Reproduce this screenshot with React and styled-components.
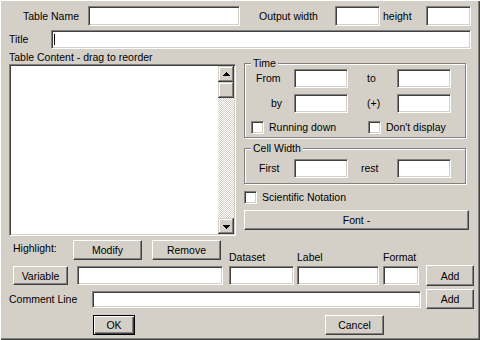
import React from 'react';
import styled, { createGlobalStyle, css } from 'styled-components';

const Global = createGlobalStyle`
  html, body { margin: 0; padding: 0; background: #d4d0c8; }
  body { font-family: "Liberation Sans", Arial, sans-serif; font-size: 10.5px; color: #000; }
  * { box-sizing: border-box; }
`;

const Window = styled.div`
  width: 480px;
  height: 340px;
  background: #d4d0c8;
  box-shadow: inset 1px 1px #fff, inset -1px -1px #404040, inset -2px -2px #808080;
  padding-top: 6px;
  display: flex;
  flex-direction: column;
  overflow: hidden;
`;

const Row = styled.div`
  display: flex;
  align-items: ${p => p.$align || 'center'};
  height: ${p => p.$h}px;
  margin-top: ${p => p.$mt || 0}px;
  flex-shrink: 0;
`;

const Label = styled.span`
  display: block;
  flex-shrink: 0;
  width: ${p => (p.$w ? p.$w + 'px' : 'auto')};
  margin-left: ${p => p.$ml || 0}px;
  padding-left: ${p => p.$pl || 0}px;
  text-align: ${p => (p.$right ? 'right' : 'left')};
  white-space: nowrap;
  line-height: ${p => p.$lh || 13}px;
  align-self: ${p => p.$self || 'auto'};
`;

const sunken = css`
  border: 1px solid;
  border-color: #808080 #fff #fff #808080;
  box-shadow: inset 1px 1px #404040, inset -1px -1px #d4d0c8;
  background: #fff;
`;

const Input = styled.input`
  ${sunken}
  display: block;
  flex-shrink: 0;
  width: ${p => p.$w}px;
  height: ${p => p.$h || 19}px;
  margin: 0 0 0 ${p => p.$ml || 0}px;
  padding: 0 3px;
  font: inherit;
  outline: none;
`;

const CaretWrap = styled.div`
  position: relative;
  flex-shrink: 0;
`;

const Caret = styled.span`
  position: absolute;
  left: 3px;
  top: 4px;
  width: 1px;
  height: 11px;
  background: #000;
`;

const Button = styled.button`
  display: block;
  flex-shrink: 0;
  width: ${p => p.$w}px;
  height: ${p => p.$h || 20}px;
  margin: ${p => p.$mt || 0}px 0 0 ${p => p.$ml || 0}px;
  padding: 0;
  background: #d4d0c8;
  font: inherit;
  color: #000;
  border: 1px solid;
  border-color: #fff #404040 #404040 #fff;
  box-shadow: inset -1px -1px #808080;
  ${p =>
    p.$default &&
    css`
      border-color: #000;
      box-shadow: inset 1px 1px #fff, inset -1px -1px #404040, inset -2px -2px #808080;
    `}
`;

const Box = styled.span`
  ${sunken}
  display: block;
  flex-shrink: 0;
  width: 13px;
  height: 13px;
`;

const Check = styled.label`
  display: flex;
  align-items: center;
  gap: 5px;
  padding-left: ${p => p.$pl || 0}px;
  margin-top: ${p => p.$mt || 0}px;
  grid-column: ${p => p.$col || 'auto'};
  line-height: 13px;
  white-space: nowrap;
`;

const Middle = styled.div`
  display: flex;
  margin-top: 2px;
  flex-shrink: 0;
`;

const LeftCol = styled.div`
  display: flex;
  flex-direction: column;
  margin-left: 9px;
  width: 227px;
`;

const RightCol = styled.div`
  display: flex;
  flex-direction: column;
  margin-left: 8px;
  width: 226px;
`;

const ListBox = styled.div`
  ${sunken}
  width: 227px;
  height: 172px;
  padding: 1px;
  display: flex;
  justify-content: flex-end;
`;

const ScrollBar = styled.div`
  width: 16px;
  display: flex;
  flex-direction: column;
`;

const ScrollBtn = styled.div`
  width: 16px;
  height: 16px;
  flex-shrink: 0;
  background: #d4d0c8;
  box-shadow: inset -1px -1px #404040, inset 1px 1px #d4d0c8, inset -2px -2px #808080, inset 2px 2px #fff;
  display: flex;
  align-items: center;
  justify-content: center;
`;

const Track = styled.div`
  flex: 1;
  background: repeating-conic-gradient(#d4d0c8 0 25%, #fff 0 50%) 0 0 / 2px 2px;
`;

const Group = styled.div`
  position: relative;
  width: 222px;
  height: ${p => p.$h}px;
  margin-top: ${p => p.$mt}px;
  border: 1px solid #808080;
  box-shadow: inset 1px 1px #fff, 1px 1px #fff;
  padding-top: ${p => p.$pt}px;
  flex-shrink: 0;
`;

const Legend = styled.span`
  position: absolute;
  left: 6px;
  top: -7px;
  padding: 0 2px;
  background: #d4d0c8;
  line-height: 13px;
`;

const GroupGrid = styled.div`
  display: grid;
  grid-template-columns: 49px 54px 49px 54px;
  grid-auto-rows: 19px;
  row-gap: 6px;
  align-items: center;
`;

const ColumnHeads = styled.div`
  display: flex;
  align-self: flex-end;
  margin-left: 8px;
`;

const Arrow = ({ down }) => (
  <svg width="7" height="4" viewBox="0 0 7 4" shapeRendering="crispEdges" style={{ display: 'block', marginTop: down ? 1 : -1 }}>
    <polygon points={down ? '0,0 7,0 3.5,4' : '0,4 7,4 3.5,0'} fill="#000" />
  </svg>
);

export default function App() {
  return (
    <>
      <Global />
      <Window>
        <Row $h={20}>
          <Label $w={79} $right>Table Name</Label>
          <Input $w={152} $h={20} $ml={9} />
          <Label $w={95} $pl={19}>Output width</Label>
          <Input $w={45} $h={20} />
          <Label $w={46} $pl={3}>height</Label>
          <Input $w={45} $h={20} />
        </Row>

        <Row $h={19} $mt={4}>
          <Label $w={42} $ml={9}>Title</Label>
          <CaretWrap>
            <Input $w={420} $h={19} />
            <Caret />
          </CaretWrap>
        </Row>

        <Middle>
          <LeftCol>
            <Label>Table Content - drag to reorder</Label>
            <ListBox>
              <ScrollBar>
                <ScrollBtn><Arrow /></ScrollBtn>
                <ScrollBtn />
                <Track />
                <ScrollBtn><Arrow down /></ScrollBtn>
              </ScrollBar>
            </ListBox>
          </LeftCol>

          <RightCol>
            <Group $h={75} $mt={12} $pt={5}>
              <Legend>Time</Legend>
              <GroupGrid>
                <Label $pl={11}>From</Label>
                <Input $w={54} />
                <Label $pl={19}>to</Label>
                <Input $w={54} />
                <Label $pl={26}>by</Label>
                <Input $w={54} />
                <Label $pl={19}>(+)</Label>
                <Input $w={54} />
                <Check $pl={6} $col="1 / 3" $mt={-2}><Box />Running down</Check>
                <Check $pl={20} $col="3 / 5" $mt={-2}><Box />Don't display</Check>
              </GroupGrid>
            </Group>

            <Group $h={36} $mt={10} $pt={10}>
              <Legend>Cell Width</Legend>
              <GroupGrid>
                <Label $pl={14}>First</Label>
                <Input $w={54} />
                <Label $pl={13}>rest</Label>
                <Input $w={54} />
              </GroupGrid>
            </Group>

            <Check $mt={7}><Box />Scientific Notation</Check>
            <Button $w={225} $h={20} $mt={6}>Font -</Button>
          </RightCol>
        </Middle>

        <Row $h={24} $mt={4} $align="flex-start">
          <Label $w={60} $ml={13} $lh={17}>Highlight:</Label>
          <Button $w={69} $h={20}>Modify</Button>
          <Button $w={69} $h={20} $ml={10}>Remove</Button>
          <ColumnHeads>
            <Label $w={68}>Dataset</Label>
            <Label $w={86}>Label</Label>
            <Label>Format</Label>
          </ColumnHeads>
        </Row>

        <Row $h={21} $mt={1}>
          <Button $w={55} $h={19} $ml={13}>Variable</Button>
          <Input $w={146} $ml={9} />
          <Input $w={65} $ml={6} />
          <Input $w={82} $ml={3} />
          <Input $w={36} $ml={4} />
          <Button $w={48} $h={21} $ml={7}>Add</Button>
        </Row>

        <Row $h={20} $mt={3}>
          <Label $w={83} $ml={9}>Comment Line</Label>
          <Input $w={329} $h={17} />
          <Button $w={48} $h={20} $ml={5}>Add</Button>
        </Row>

        <Row $h={20} $mt={6}>
          <Button $w={42} $h={20} $ml={93} $default>OK</Button>
          <Button $w={59} $h={20} $ml={190}>Cancel</Button>
        </Row>
      </Window>
    </>
  );
}
